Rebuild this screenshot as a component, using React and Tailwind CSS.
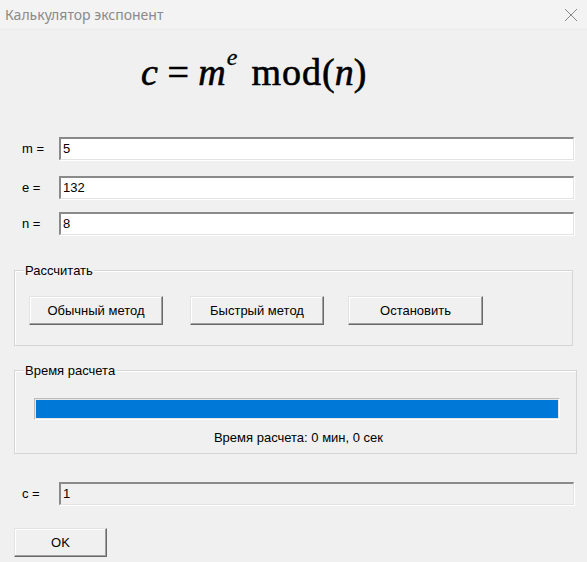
function Field({ label, value, readOnly }) {
  return (
    <div className="flex items-center h-[23px]">
      <span className="w-[59px] pl-[22px] text-[13px]">{label}</span>
      <div
        className={
          'flex-1 mr-[13px] h-[23px] flex items-center pl-[2px] border-t-2 border-l-2 border-t-[#8a8a8a] border-l-[#8a8a8a] border-b border-r border-b-[#e3e3e3] border-r-[#e3e3e3] shadow-[1px_1px_0_#fff] text-[13px] ' +
          (readOnly ? 'bg-[#f0f0f0]' : 'bg-white')
        }
      >
        {value}
      </div>
    </div>
  )
}

function Btn({ children, w }) {
  return (
    <button
      className={
        'h-[29px] bg-[#f0f0f0] text-[13px] border border-t-[#e3e3e3] border-l-[#e3e3e3] border-b-[#696969] border-r-[#696969] shadow-[inset_-1px_-1px_0_#a0a0a0,inset_1px_1px_0_#fff] ' +
        w
      }
    >
      {children}
    </button>
  )
}

export default function App() {
  return (
    <div className="w-[587px] h-[562px] bg-[#f0f0f0] text-black font-['Liberation_Sans',Arial,sans-serif] overflow-hidden">
      <div className="h-[30px] bg-[#f3f3f3] flex items-center justify-between pl-[5px] pr-[9px] border-b border-[#ebebeb]">
        <span className="text-[14px] text-[#8a8a8a] font-['Noto_Sans',sans-serif]">Калькулятор экспонент</span>
        <svg width="14" height="14" viewBox="0 0 14 14" className="text-[#888]">
          <path d="M1 1 L13 13 M13 1 L1 13" stroke="currentColor" strokeWidth="1" />
        </svg>
      </div>

      <div className="h-[107px] pl-[141px] pt-[20px]">
        <div className="font-['Liberation_Serif',serif] text-[38px] leading-[44px] whitespace-nowrap [-webkit-text-stroke:0.6px_black]">
          <i>c</i> = <i>m</i>
          <span className="relative -top-[20px] text-[24px] ml-[1px] [-webkit-text-stroke:0.3px_black]"><i>e</i></span>
          <span className="ml-[14px] tracking-[1px]">mod</span>(<i>n</i>)
        </div>
      </div>

      <div className="flex flex-col gap-[16px]">
        <Field label="m =" value="5" />
        <Field label="e =" value="132" />
        <div className="-mt-[3px]">
          <Field label="n =" value="8" />
        </div>
      </div>

      <fieldset className="ml-[14px] mr-[14px] mt-[28px] h-[83px] border border-[#d5d5d5] shadow-[inset_1px_1px_0_#fff] pl-[14px] pr-0">
        <legend className="ml-[-5px] px-[1px] text-[13px] leading-[15px]">Рассчитать</legend>
        <div className="flex mt-[18px]">
          <Btn w="w-[134px]">Обычный метод</Btn>
          <Btn w="w-[134px] ml-[27px]">Быстрый метод</Btn>
          <Btn w="w-[135px] ml-[24px]">Остановить</Btn>
        </div>
      </fieldset>

      <fieldset className="ml-[14px] mr-[10px] mt-[17px] h-[91px] border border-[#d5d5d5] shadow-[inset_1px_1px_0_#fff] px-0">
        <legend className="ml-[9px] px-[1px] text-[13px] leading-[15px]">Время расчета</legend>
        <div className="ml-[19px] mr-[16px] mt-[20px] h-[22px] border border-t-[#bcbcbc] border-l-[#bcbcbc] border-b-white border-r-white bg-[#e6e6e6] p-[1px]">
          <div className="h-full w-full bg-[#0078d7]" />
        </div>
        <div className="text-center text-[13px] mt-[8px] pl-[6px]">Время расчета: 0 мин, 0 сек</div>
      </fieldset>

      <div className="mt-[28px]">
        <Field label="c =" value="1" readOnly />
      </div>

      <div className="mt-[23px] pl-[14px]">
        <Btn w="w-[93px]">OK</Btn>
      </div>
    </div>
  )
}
